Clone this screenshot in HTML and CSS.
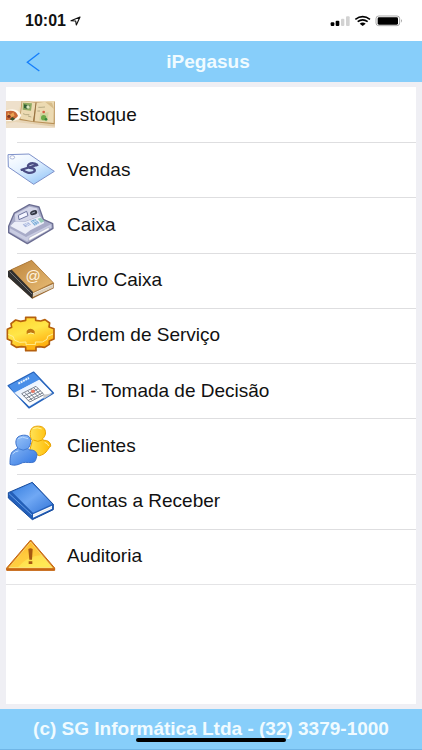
FILE: index.html
```html
<!DOCTYPE html>
<html lang="pt-BR">
<head>
<meta charset="utf-8">
<meta name="viewport" content="width=device-width, initial-scale=1">
<title>iPegasus</title>
<link rel="stylesheet" href="styles.css">
</head>
<body>
<div class="status">
  <div class="status-time">
    <span>10:01</span>
    <svg width="11" height="10" viewBox="0 0 33 30" aria-hidden="true"><path d="M3 14 30 3 19 27 17 15Z" fill="none" stroke="#111" stroke-width="3.5" stroke-linejoin="round"/></svg>
  </div>
  <svg width="74" height="12" viewBox="0 0 222 36" aria-hidden="true">
    <rect x="2" y="22" width="11" height="11" rx="3"/><rect x="17" y="17" width="11" height="16" rx="3"/>
    <rect x="33" y="11" width="10" height="22" rx="3" fill="#d2d2d2"/><rect x="48" y="4" width="11" height="29" rx="3" fill="#d2d2d2"/>
    <g fill="none" stroke="#000" stroke-width="5"><path d="M76 13Q98-3 120 13M83 20Q98 9 113 20"/></g>
    <path d="M89 26Q98 19 107 26L98 33Z"/>
    <rect x="138" y="3" width="71" height="29" rx="8" fill="#fff" stroke="#999" stroke-width="2.5"/>
    <rect x="143" y="7" width="61" height="22" rx="4"/><path d="M213 12q5 5 0 11Z" fill="#888"/>
  </svg>
</div>
<header class="bar">
  <button class="back" type="button" aria-label="Voltar"><svg width="14" height="20" viewBox="0 0 42 60" aria-hidden="true"><path d="M40 3 4 31 40 57" fill="none" stroke="#167ffb" stroke-width="4"/></svg></button>
  <h1 class="title">iPegasus</h1>
</header>
<main class="content">
  <nav class="panel">
    <ul class="menu">
      <li><a class="row" href="#estoque">
        <svg class="icon" viewBox="18 24 150 132" aria-hidden="true">
          <defs><linearGradient id="table" x2="1" y2="1"><stop stop-color="#f2e3c9"/><stop offset="1" stop-color="#dfc8a3"/></linearGradient></defs>
          <path d="M18 48H165V129H18Z" fill="url(#table)"/>
          <path d="M18 48H64L55 76 18 70ZM45 111 105 118 165 125V129H18V116Z" fill="#eee0cb"/>
          <path d="M65 48 110 52 164 50V118L104 112 58 105Z" fill="#b89158"/>
          <path d="M67 48 108 53 99 109 61 101ZM109 53 162 48 161 114 104 109Z" fill="#ecdab2"/>
          <path d="m108 53-7 56" stroke="#967344" stroke-width="3"/>
          <path d="M136 51 162 72 156 53Z" fill="#d7bc89"/>
          <path d="m69 53 27 2-3 22-25-3Z" fill="#8faa63"/>
          <path d="m72 58 19 4-8 10-11-3Z" fill="#315f35"/><circle cx="84" cy="66" r="5" fill="#dce9c1"/>
          <path d="m121 84 25-2-4 28-24-4Z" fill="#d2d4a0"/><circle cx="131" cy="98" r="8" fill="#6daa48"/><circle cx="131" cy="81" r="4" fill="#d95c41"/><circle cx="138" cy="103" r="4" fill="#35863e"/>
          <path d="m69 86 8 3 11 0M115 67h8l12-1M84 93l10 3M112 78h8" stroke="#9b936d" stroke-width="2" fill="none"/>
          <path d="M18 76Q53 65 64 91 60 111 18 107Z" fill="#fffaf0"/>
          <path d="M18 79Q48 72 54 93 46 106 18 105Z" fill="#c76736"/>
          <path d="m24 82 6 7 10-7 4 11-12 4-10-5Z" fill="#e9a353"/><circle cx="27" cy="94" r="5" fill="#7d3723"/><path d="m29 103 8-7 9 5-8 6Z" fill="#40522c"/>
        </svg><span>Estoque</span></a></li>
      <li><a class="row" href="#vendas">
        <svg class="icon" viewBox="18 190 150 132" aria-hidden="true">
          <defs><linearGradient id="tag" x1="0" y1="0" x2=".7" y2="1"><stop stop-color="#fff"/><stop offset=".45" stop-color="#e6f2ff"/><stop offset="1" stop-color="#98c8f8"/></linearGradient></defs>
          <path d="M24 210 87 208 163 260 101 299 25 247Z" fill="url(#tag)" stroke="#7e91ca" stroke-width="3" stroke-linejoin="round"/>
          <ellipse cx="37" cy="218" rx="7" ry="5" fill="#fff" stroke="#8998c7" stroke-width="2"/>
          <path d="M113 244C108 233 93 235 87 239 79 246 88 250 94 250 104 251 108 257 100 262 91 267 75 265 68 254M62 256 114 240" fill="none" stroke="#4b4d84" stroke-width="7"/>
        </svg><span>Vendas</span></a></li>
      <li><a class="row" href="#caixa">
        <svg class="icon" viewBox="18 39 150 132" aria-hidden="true">
          <path d="M43 69 88 44 117 51 130 88 158 101 159 115 82 161 26 128 26 109Z" fill="#a8abc8" stroke="#6b6d92" stroke-width="4" stroke-linejoin="round"/>
          <path d="M45 73 88 50 111 55 118 78 76 94 46 95Z" fill="#d4d6e9"/>
          <path d="M43 96 76 95 120 79 133 99 91 121 76 132 31 108Z" fill="#eceef8"/>
          <path d="m30 115 48 26 75-38 1 10-73 41-52-29Z" fill="#c9cce2"/><path d="m87 143 60-31v7l-60 33Z" fill="#fff" stroke="#8588a8"/>
          <path d="m55 76 25-12 4 13-27 12Z" fill="#f4f5ff" stroke="#6c729e" stroke-width="3"/>
          <ellipse cx="101" cy="68" rx="11" ry="7" fill="#343744" transform="rotate(-20 101 68)"/><path d="m95 70 10-4" stroke="#a3aabe" stroke-width="3"/>
          <path d="m68 103 17-6 8 7-17 8Z" fill="#aab6dc"/><path d="m91 92 15-5 12 12-14 8Z" fill="#7daed8"/><path d="m113 86 9-3 11 10-10 6Z" fill="#95cdb8"/>
          <path d="m72 101 13 7M77 99l13 7M94 91l14 13M101 88l13 13M98 98l14-7" stroke="#eef5ff" stroke-width="2"/>
        </svg><span>Caixa</span></a></li>
      <li><a class="row" href="#livro-caixa">
        <svg class="icon" viewBox="18 204 150 132" aria-hidden="true">
          <defs><linearGradient id="leather" x2="1" y2="1"><stop stop-color="#bd853d"/><stop offset="1" stop-color="#e9bd76"/></linearGradient></defs>
          <path d="M24 243 95 211 161 280 161 295 97 326 24 260Z" fill="#99662d"/>
          <path d="m98 309 61-27v11l-61 28Z" fill="#eee5d4"/><path d="m99 314 60-27M99 318l60-27" stroke="#a38d68" stroke-width="1"/>
          <path d="M34 239 95 211 160 278 98 308Z" fill="url(#leather)" stroke="#a87435" stroke-width="2"/>
          <path d="M24 243 35 239 99 306 97 326 24 260Z" fill="#303030"/><path d="m29 245 67 67" stroke="#777" stroke-width="3"/>
          <text class="cover-at" x="99" y="272" text-anchor="middle">@</text>
        </svg><span>Livro Caixa</span></a></li>
      <li><a class="row" href="#ordem-de-servico">
        <svg class="icon" viewBox="18 40 150 132" aria-hidden="true">
          <defs><linearGradient id="gear" x2=".5" y2="1"><stop stop-color="#ffd02b"/><stop offset=".5" stop-color="#ffe648"/><stop offset="1" stop-color="#ffae0b"/></linearGradient></defs>
          <path d="M77 62V53H107V62L122 64 135 60 149 70 147 82 162 87V118L148 124 148 134 134 143 118 141 108 142V153H77V142L64 141 49 143 34 134 35 124 22 118V89L35 83 33 72 47 61 62 65Z" fill="url(#gear)" stroke="#b5600e" stroke-width="5" stroke-linejoin="round"/>
          <path d="M25 104 40 111 43 121 59 128 78 127V135H106V127L127 127 141 119 143 110 159 103" fill="none" stroke="#ffef94" stroke-width="3"/>
          <path d="M81 136h23v13H81Z" fill="#ffb414"/>
          <path d="M80 103V94Q84 87 92 87T104 95V103Q92 95 80 103Z" fill="#c07812"/><path d="M84 103Q92 97 102 103" stroke="#fff4a1" stroke-width="3" fill="none"/>
        </svg><span>Ordem de Serviço</span></a></li>
      <li><a class="row" href="#bi">
        <svg class="icon" viewBox="18 207 150 132" aria-hidden="true">
          <defs><linearGradient id="page" x2="1" y2="1"><stop stop-color="#d5e7ff"/><stop offset=".6" stop-color="#fff"/></linearGradient></defs>
          <path d="M25 257 101 217 160 279 87 323Z" fill="#e0edff" stroke="#2865bd" stroke-width="5" stroke-linejoin="round"/>
          <path d="M27 257 101 218 120 238 43 279Z" fill="#4a8fe8"/><path d="m43 278 75-38 36 37-22 14-45 26Z" fill="url(#page)"/>
          <path d="m55 251 32-17" stroke="#eaf5ff" stroke-width="6" stroke-dasharray="6 2"/>
          <g fill="none" stroke="#7c8491" stroke-width="3"><path d="m65 281 43-22 24 25-43 22ZM71 288l44-22M78 295l44-23M84 302l45-24M74 277l23 24M83 272l23 25M92 267l24 25M101 263l23 24"/></g>
          <path d="m91 273 9-5 6 7-9 5Z" fill="#e97965"/><path d="m130 284 28-4-27 17Z" fill="#c7c8cb"/>
        </svg><span>BI - Tomada de Decisão</span></a></li>
      <li><a class="row" href="#clientes">
        <svg class="icon" viewBox="18 36 150 132" aria-hidden="true">
          <defs><linearGradient id="gold"><stop stop-color="#ffe45a"/><stop offset="1" stop-color="#ffba00"/></linearGradient><linearGradient id="blue" x2=".7" y2="1"><stop stop-color="#a1cafa"/><stop offset="1" stop-color="#3d7fe5"/></linearGradient></defs>
          <path d="M97 86C86 72 89 48 103 44 113 41 128 42 133 50 140 61 136 73 128 80L130 85C145 84 153 93 152 103 146 107 143 115 138 120 133 126 126 129 118 131L88 119Z" fill="url(#gold)" stroke="#e7a000" stroke-width="3"/>
          <path d="M99 50q12-6 26 1M134 91q10 3 12 11" fill="none" stroke="#fff09b" stroke-width="3"/><path d="M100 84q13 8 27 0" fill="none" stroke="#e9a400" stroke-width="3"/>
          <path d="M54 108C45 98 46 82 54 75 62 69 79 67 87 74 96 83 92 101 84 109L88 114C102 113 110 119 111 129 109 137 108 144 104 149 93 155 80 149 68 152 56 157 45 163 30 157 30 140 31 122 40 117Z" fill="url(#blue)" stroke="#3e73cc" stroke-width="3"/>
          <path d="M54 80q12-9 30 0M38 126q8-9 17-9" fill="none" stroke="#b9d8ff" stroke-width="3"/><path d="M56 110q13 9 27 0" fill="none" stroke="#407bd2" stroke-width="3"/>
        </svg><span>Clientes</span></a></li>
      <li><a class="row" href="#contas-a-receber">
        <svg class="icon" viewBox="18 202 150 132" aria-hidden="true">
          <defs><linearGradient id="cover" x2="1" y2="1"><stop stop-color="#357edf"/><stop offset=".5" stop-color="#70a8f4"/><stop offset="1" stop-color="#3274d7"/></linearGradient></defs>
          <path d="M25 243 97 212 160 278 160 294 97 324 25 259Z" fill="#235fba" stroke="#174c9d" stroke-width="3" stroke-linejoin="round"/>
          <path d="M35 241 96 214 157 277 98 304Z" fill="url(#cover)"/>
          <path d="m99 308 57-26v9l-57 27Z" fill="#fff"/><path d="m99 313 57-26" stroke="#a9b7c8" stroke-width="1"/>
          <path d="M27 246 96 310" stroke="#699fe7" stroke-width="3"/><path d="m35 241 63 63-2 16" fill="none" stroke="#1c54a9" stroke-width="2"/>
        </svg><span>Contas a Receber</span></a></li>
      <li><a class="row" href="#auditoria">
        <svg class="icon" viewBox="18 45 150 132" aria-hidden="true">
          <defs><linearGradient id="warn" x2=".5" y2="1"><stop stop-color="#ffa914"/><stop offset=".55" stop-color="#ffd94a"/><stop offset="1" stop-color="#ffe954"/></linearGradient></defs>
          <path d="M92 63 164 147V154H20V147Z" fill="#dc851b" stroke="#c46612" stroke-width="3" stroke-linejoin="round"/>
          <path d="M92 69 157 146H27Z" fill="url(#warn)" stroke="#fff09b" stroke-width="2"/><path d="M92 71 124 108Q81 112 54 144H28Z" fill="#ffb82e" opacity=".45"/>
          <path d="M85 90Q91 85 98 90L96 122H88ZM86 127h11v8H86Z" fill="#a65812"/><path d="M20 151h144" stroke="#c66415" stroke-width="5"/>
        </svg><span>Auditoria</span></a></li>
    </ul>
  </nav>
</main>
<footer class="footer">(c) SG Informática Ltda - (32) 3379-1000<span class="home-indicator"></span></footer>
</body>
</html>
```

FILE: styles.css
```css
* { box-sizing: border-box; }

body {
  margin: 0;
  min-height: 100vh;
  display: flex;
  flex-direction: column;
  background: #efeff4;
  color: #111;
  font-family: "Liberation Sans", Arial, sans-serif;
  font-size: 19px;
}

.status {
  display: flex;
  align-items: center;
  justify-content: space-between;
  height: 41px;
  padding: 0 18px 0 25px;
  background: #fff;
}

.status-time {
  display: flex;
  align-items: center;
  gap: 4px;
  font-size: 16px;
  font-weight: bold;
}

.bar {
  display: grid;
  grid-template-columns: 60px 1fr 66px;
  align-items: center;
  height: 41px;
  background: #87cefa;
}

.back {
  display: flex;
  align-items: center;
  height: 41px;
  padding: 0 0 0 26px;
  border: 0;
  background: none;
}

.title {
  margin: 0;
  color: #f0fbff;
  font-size: 19px;
  text-align: center;
}

.content {
  flex: 1;
  display: flex;
  padding: 5px 6px;
}

.panel {
  flex: 1;
  background: #fff;
}

.menu {
  display: grid;
  grid-auto-rows: 1fr;
  min-height: 498px;
  margin: 0;
  padding: 0;
  list-style: none;
  border-bottom: 1px solid #e4e4e6;
}

.menu li { display: grid; }

.menu li + li {
  background: linear-gradient(#dedee0, #dedee0) 11px 0 / 100% 1px no-repeat;
}

.row {
  display: flex;
  align-items: center;
  gap: 11px;
  color: #111;
  text-decoration: none;
}

.icon {
  width: 50px;
  height: 44px;
}

.cover-at {
  fill: #fff3df;
  font-size: 45px;
}

.footer {
  position: relative;
  display: flex;
  align-items: center;
  justify-content: center;
  height: 41px;
  border-bottom: 1px solid #70b6e6;
  background: #87cefa;
  color: #f0fbff;
  font-weight: bold;
  white-space: nowrap;
}

.home-indicator {
  position: absolute;
  bottom: 7px;
  left: 50%;
  width: 150px;
  height: 4px;
  margin-left: -75px;
  border-radius: 2px;
  background: #000;
}
```
